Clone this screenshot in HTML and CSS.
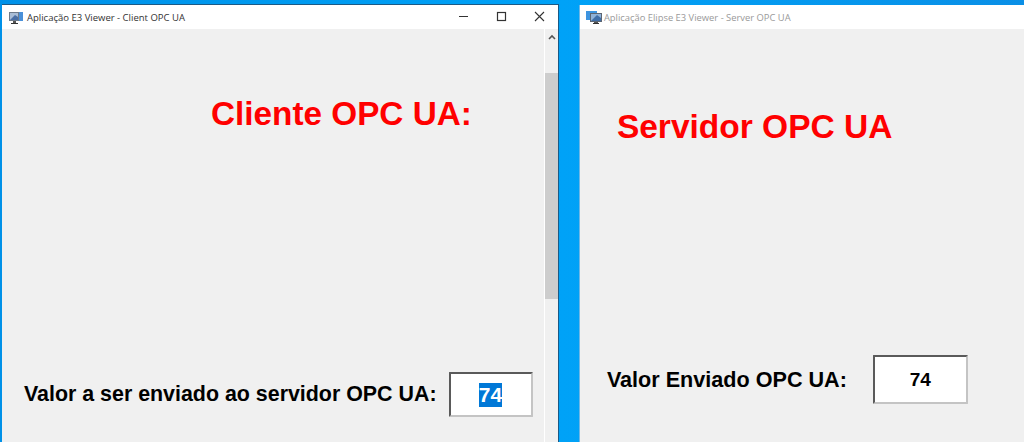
FILE: index.html
```html
<!DOCTYPE html>
<html lang="pt">
<head>
  <meta charset="UTF-8">
  <title>Aplicação E3 Viewer</title>
  <link rel="stylesheet" href="styles.css">
</head>
<body>

  <div class="desktop">

    <div class="window window-client">
      <div class="titlebar">
        <svg class="app-icon" width="18" height="16" viewBox="0 0 18 16">
          <rect x="12" y="3" width="4" height="9" fill="#4a90d9"/>
          <rect x="2" y="3" width="10" height="9" fill="#6d7a8a"/>
          <rect x="3" y="4" width="8" height="7" fill="#a9bdd6"/>
          <path d="M3 11 L8 6 L11 8 L11 11 Z" fill="#4a6fa5"/>
          <rect x="6" y="12" width="3" height="2" fill="#555"/>
          <rect x="4" y="14" width="7" height="1" fill="#333"/>
        </svg>
        <span class="title">Aplicação E3 Viewer - Client OPC UA</span>
        <div class="win-buttons">
          <svg width="38" height="24" viewBox="0 0 38 24"><path d="M15 11.5 H24" stroke="#333" stroke-width="1"/></svg>
          <svg width="38" height="24" viewBox="0 0 38 24"><rect x="15.5" y="7.5" width="8" height="8" fill="none" stroke="#333" stroke-width="1.2"/></svg>
          <svg width="38" height="24" viewBox="0 0 38 24"><path d="M15 7 L24 16 M24 7 L15 16" stroke="#333" stroke-width="1.1"/></svg>
        </div>
      </div>
      <div class="window-body">
        <div class="screen screen-client">
          <h1 class="heading heading-client">Cliente OPC UA:</h1>
          <div class="value-row row-client">
            <label class="value-label label-client">Valor a ser enviado ao servidor OPC UA:</label>
            <div class="value-box box-client"><span class="selected">74</span></div>
          </div>
        </div>
        <div class="scrollbar">
          <svg class="arrow" width="14" height="16" viewBox="0 0 14 16"><path d="M4 10 L7 7 L10 10" fill="none" stroke="#555" stroke-width="1.6"/></svg>
          <div class="thumb"></div>
        </div>
      </div>
    </div>

    <div class="window window-server">
      <div class="titlebar">
        <svg class="app-icon" width="18" height="16" viewBox="0 0 18 16">
          <rect x="1" y="2" width="11" height="9" fill="#3d94e0"/>
          <rect x="5" y="4" width="12" height="9" fill="#5c6673"/>
          <rect x="6" y="5" width="10" height="7" fill="#8fb2d9"/>
          <path d="M6 12 L12 6 L16 9 L16 12 Z" fill="#3f6ea8"/>
          <rect x="9" y="13" width="4" height="1" fill="#555"/>
          <rect x="8" y="14" width="6" height="1" fill="#333"/>
        </svg>
        <span class="title title-inactive">Aplicação Elipse E3 Viewer - Server OPC UA</span>
      </div>
      <div class="window-body">
        <div class="screen screen-server">
          <h1 class="heading heading-server">Servidor OPC UA</h1>
          <div class="value-row row-server">
            <label class="value-label label-server">Valor Enviado OPC UA:</label>
            <div class="value-box box-server">74</div>
          </div>
        </div>
      </div>
    </div>

  </div>

</body>
</html>
```

FILE: styles.css
```css
html, body {
  margin: 0;
  padding: 0;
  height: 100%;
  overflow: hidden;
}

body {
  font-family: "Liberation Sans", Arial, sans-serif;
  background-color: #00a2f7;
}

.desktop {
  display: flex;
  height: 442px;
  padding-top: 5px;
  box-sizing: border-box;
  background: linear-gradient(90deg, #0091e8 0%, #00a2f7 55%, #0a8fe6 100%);
}

.window {
  display: flex;
  flex-direction: column;
  background-color: #f0f0f0;
}

.window-client {
  width: 557px;
  margin-left: 2px;
  border-right: 1px solid #1c5a85;
  box-shadow: 0 -1px 0 #1c5a85;
}

.window-server {
  width: 445px;
  margin-left: 20px;
  border-left: 1px solid #6fb7e6;
}

.titlebar {
  display: flex;
  align-items: center;
  height: 24px;
  flex-shrink: 0;
  background-color: #fff;
}

.app-icon {
  margin-left: 5px;
  flex-shrink: 0;
}

.window-server .app-icon {
  margin-left: 5px;
}

.title {
  margin-left: 2px;
  font-family: "Open Sans", sans-serif;
  font-size: 9.5px;
  color: #333;
}

.title-inactive {
  margin-left: 1px;
  font-size: 9.4px;
  color: #9a9a9a;
}

.win-buttons {
  display: flex;
  margin-left: auto;
}

.win-buttons svg {
  display: block;
}

.window-body {
  display: flex;
  flex: 1;
  min-height: 0;
}

.screen {
  flex: 1;
  display: flex;
  flex-direction: column;
}

.heading {
  margin: 0;
  font-size: 33.3px;
  line-height: 38px;
  font-weight: bold;
  color: #ff0000;
}

.heading-client {
  margin-top: 66px;
  margin-left: 209px;
}

.heading-server {
  margin-top: 79px;
  margin-left: 37px;
  font-size: 33.5px;
}

.value-row {
  display: flex;
  align-items: center;
}

.row-client {
  margin-top: 239px;
  margin-left: 22px;
}

.row-server {
  margin-top: 209px;
  margin-left: 27px;
}

.value-label {
  font-weight: bold;
  color: #000;
}

.label-client {
  font-size: 21.4px;
}

.label-server {
  font-size: 21.6px;
}

.value-box {
  display: flex;
  align-items: center;
  justify-content: center;
  box-sizing: border-box;
  background-color: #fff;
  border: 2px solid;
  border-color: #5a5a5a #c4c4c4 #c4c4c4 #5a5a5a;
  border-radius: 1px;
  font-size: 19px;
  font-weight: bold;
  color: #000;
}

.box-client {
  width: 84px;
  height: 45px;
  margin-left: 12px;
  font-size: 21px;
}

.box-server {
  width: 95px;
  height: 49px;
  margin-left: 26px;
}

.selected {
  padding: 0;
  line-height: 24px;
  background-color: #0078d7;
  color: #fff;
}

.scrollbar {
  width: 13px;
  flex-shrink: 0;
  background-color: #f0f0f0;
  border-left: 1px solid #fff;
}

.arrow {
  display: block;
}

.thumb {
  height: 226px;
  margin-top: 28px;
  background-color: #cdcdcd;
}
```
